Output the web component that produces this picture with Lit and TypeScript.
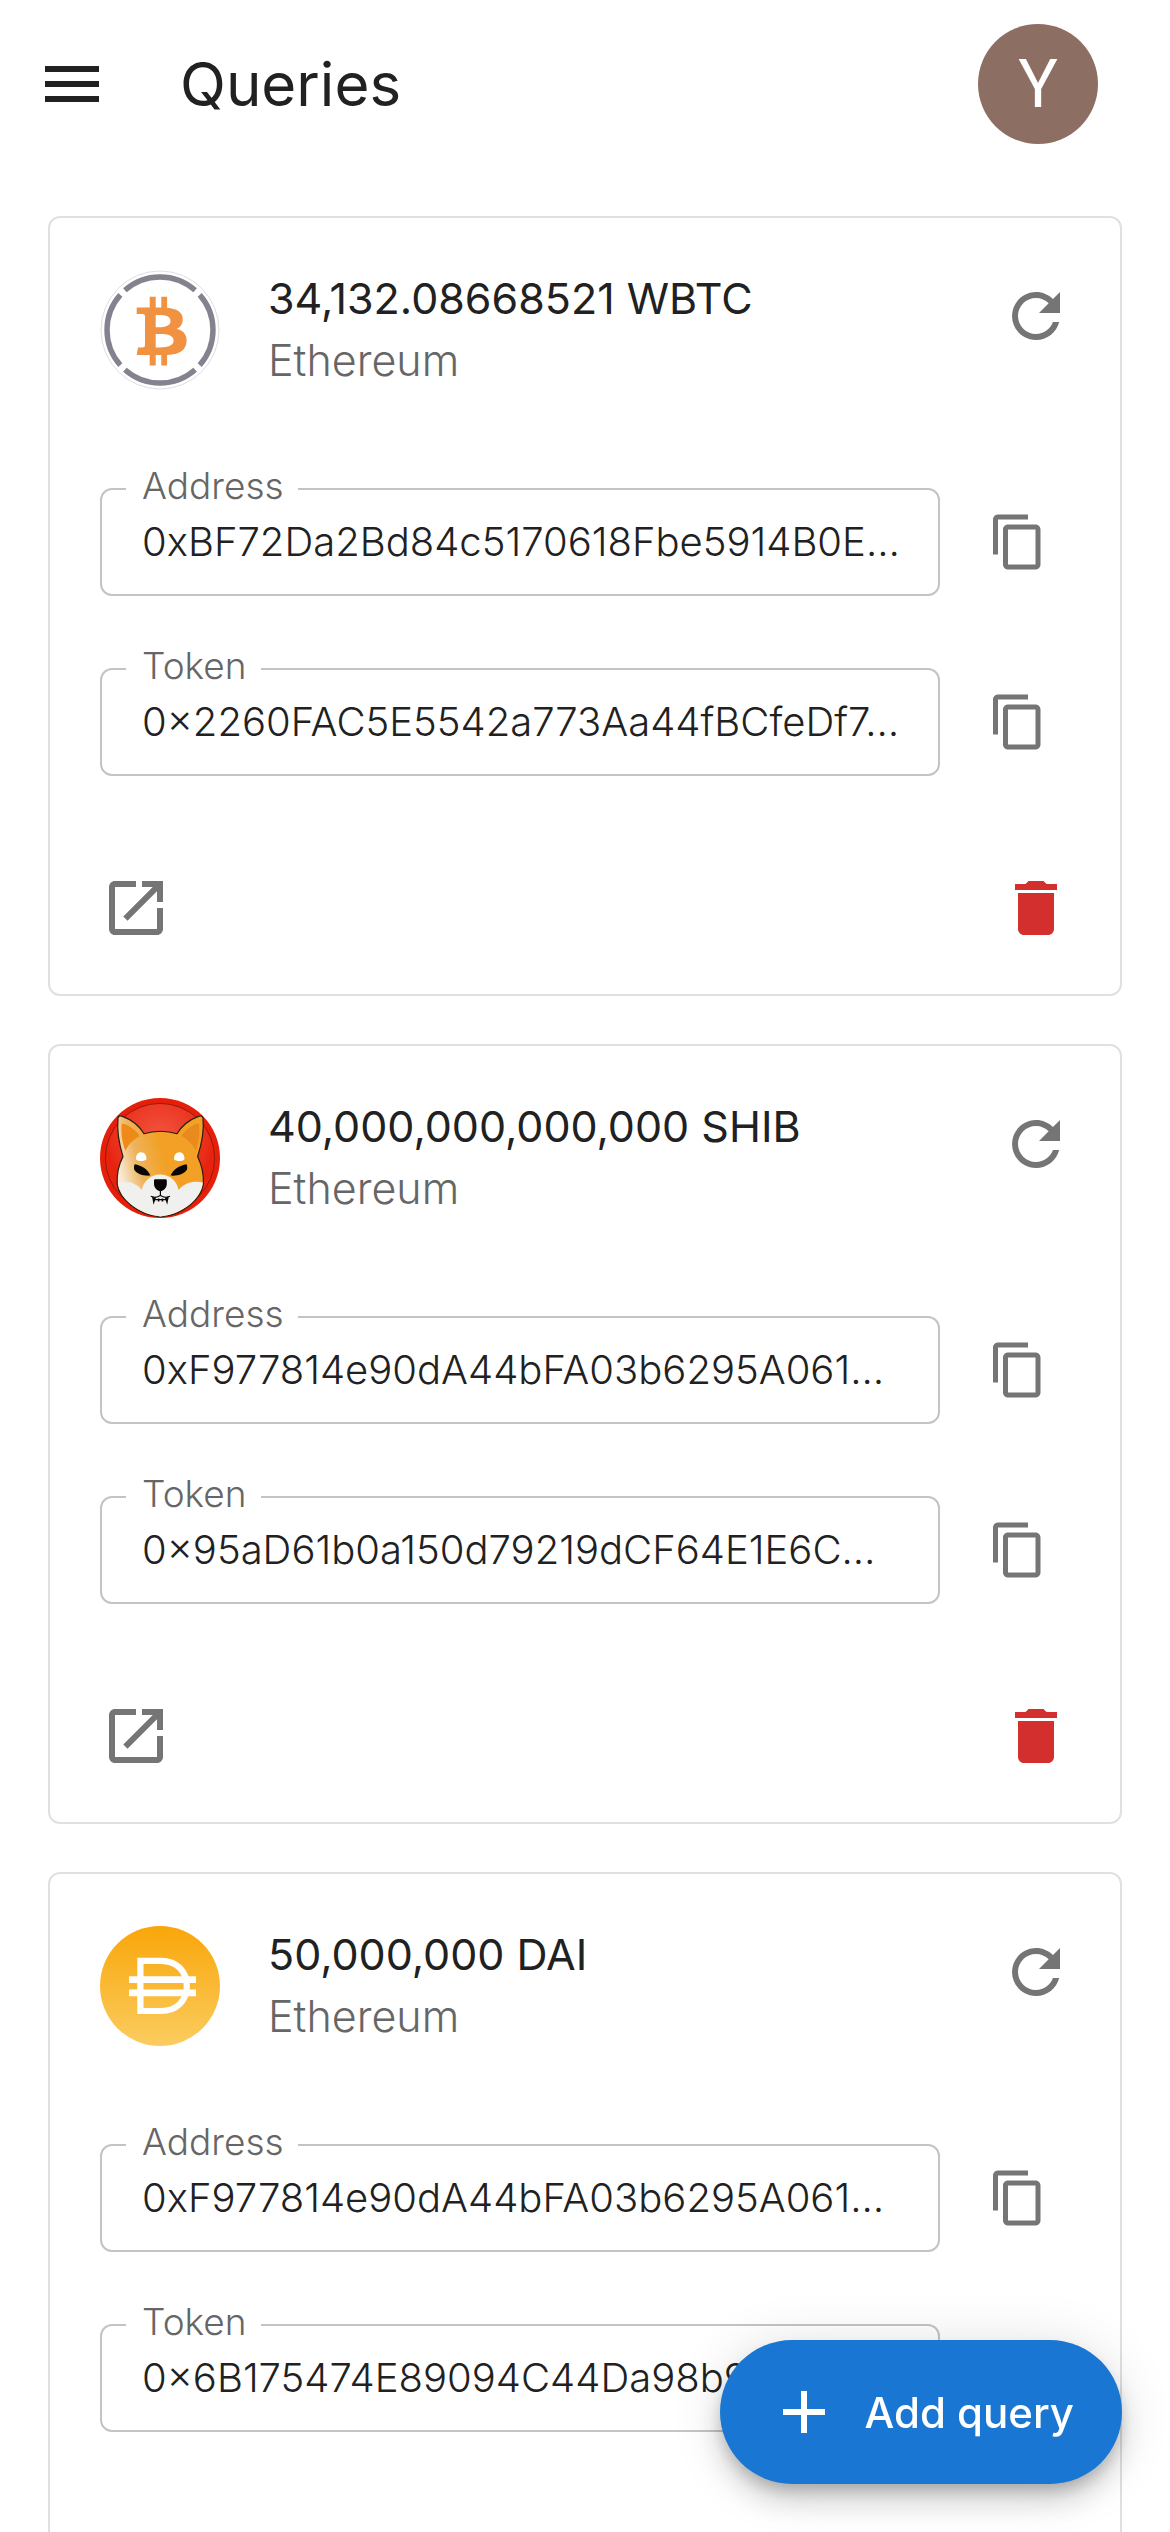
import { LitElement, html, svg, css } from "lit";
import { customElement, property } from "lit/decorators.js";

interface Query {
  id: string;
  amount: string;
  chain: string;
  logo: "wbtc" | "shib" | "dai";
  address: string;
  token: string;
}

const QUERIES: Query[] = [
  {
    id: "wbtc",
    amount: "34,132.08668521 WBTC",
    chain: "Ethereum",
    logo: "wbtc",
    address: "0xBF72Da2Bd84c5170618Fbe5914B0E…",
    token: "0×2260FAC5E5542a773Aa44fBCfeDf7…",
  },
  {
    id: "shib",
    amount: "40,000,000,000,000 SHIB",
    chain: "Ethereum",
    logo: "shib",
    address: "0xF977814e90dA44bFA03b6295A061…",
    token: "0×95aD61b0a150d79219dCF64E1E6C…",
  },
  {
    id: "dai",
    amount: "50,000,000 DAI",
    chain: "Ethereum",
    logo: "dai",
    address: "0xF977814e90dA44bFA03b6295A061…",
    token: "0×6B175474E89094C44Da98b954Ee…",
  },
];

const ICONS = {
  menu: "M3 18h18v-2H3v2zm0-5h18v-2H3v2zm0-7v2h18V6H3z",
  refresh:
    "M17.65 6.35C16.2 4.9 14.21 4 12 4c-4.42 0-7.99 3.58-7.99 8s3.57 8 7.99 8c3.73 0 6.84-2.55 7.73-6h-2.08c-.82 2.33-3.04 4-5.65 4-3.31 0-6-2.69-6-6s2.69-6 6-6c1.66 0 3.14.69 4.22 1.78L13 11h7V4l-2.35 2.35z",
  copy: "M16 1H4c-1.1 0-2 .9-2 2v14h2V3h12V1zm3 4H8c-1.1 0-2 .9-2 2v14c0 1.1.9 2 2 2h11c1.1 0 2-.9 2-2V7c0-1.1-.9-2-2-2zm0 16H8V7h11v14z",
  remove: "M6 19c0 1.1.9 2 2 2h8c1.1 0 2-.9 2-2V7H6v12zM19 4h-3.5l-1-1h-5l-1 1H5v2h14V4z",
  add: "M19 13h-6v6h-2v-6H5v-2h6V5h2v6h6v2z",
};

const icon = (path: string, small = false) => html`
  <svg class=${small ? "icon small" : "icon"} viewBox="0 0 24 24" aria-hidden="true">
    <path d=${path}></path>
  </svg>
`;

/* Square frame with two breaks and an arrow pointing out of its corner. */
const openIcon = html`
  <svg class="icon" viewBox="0 0 24 24" aria-hidden="true">
    <path d="M12 3H5c-1.1 0-2 .9-2 2v14c0 1.1.9 2 2 2h14c1.1 0 2-.9 2-2v-7h-2v7H5V5h7V3z"></path>
    <path d="M14 3h7v7h-2V6.41l-9.83 9.83-1.41-1.41L17.59 5H14V3z"></path>
  </svg>
`;

const wbtcLogo = svg`
  <circle cx="60" cy="60" r="59" fill="#fff" stroke="#dedee2" stroke-width="1"></circle>
  <g fill="none" stroke="#85818e" stroke-width="5.4">
    <path d="M24.9 20.3A53 53 0 0 1 95.1 20.3"></path>
    <path d="M99.7 24.9A53 53 0 0 1 99.7 95.1"></path>
    <path d="M95.1 99.7A53 53 0 0 1 24.9 99.7"></path>
    <path d="M20.3 95.1A53 53 0 0 1 20.3 24.9"></path>
  </g>
  <path
    fill="#f09242"
    fill-rule="evenodd"
    d="M36.7 37.4H49.7V26.8H55.7V37.4H61.3V26.8H67.1V37.7C76.5 38.6 82.8 42 82.8 49C82.8 53.8 80.8 57 76.8 58.7C83 60.5 86.6 64 86.6 70.3C86.6 80.2 79.5 84.6 67.1 85V95.6H61.3V85H55.7V95.6H49.7V85H36.7L38 77.4H42.4C44.3 77.4 45 76.7 45 74.8V46.8C45 44.6 44.2 43.9 42.2 43.9H36.7ZM55.7 45V57.3H58C65.8 57.3 70.5 55.6 70.5 51C70.5 46.6 66.4 45 59.2 45ZM55.7 64V77.4H59.6C68.6 77.4 73.6 75.6 73.6 70.6C73.6 65.8 68.6 64 59.6 64Z"
  ></path>
`;

const shibLogo = svg`
  <defs>
    <radialGradient id="coin" cx="0.5" cy="0.3" r="0.5">
      <stop offset="0" stop-color="#f25440"></stop>
      <stop offset="0.9" stop-color="#e92c17"></stop>
      <stop offset="1" stop-color="#e6230f"></stop>
    </radialGradient>
    <linearGradient id="fur" x1="18" y1="68" x2="62" y2="56" gradientUnits="userSpaceOnUse">
      <stop offset="0" stop-color="#f8ead6"></stop>
      <stop offset="0.45" stop-color="#eeb35c"></stop>
      <stop offset="1" stop-color="#f2a126"></stop>
    </linearGradient>
  </defs>
  <circle cx="60" cy="60" r="60" fill="#e51f09"></circle>
  <circle cx="60" cy="60" r="54.6" fill="url(#coin)" stroke="#96190b" stroke-width="1"></circle>
  <path
    fill="url(#fur)"
    stroke="#2b1c13"
    stroke-width="1.2"
    stroke-linejoin="round"
    d="M18 20C18.4 17.8 20.4 17.6 23 18.6C32 21.8 39 27.5 44 35.8C54 32.4 67 32.4 77 35.8C82 27.5 89 21.8 98 18.6C100.6 17.6 102.6 17.8 103 20C104.2 33 101.6 46.5 97.6 58.6C101.6 67 104 76.5 103.4 86C101.5 100 84 117 60.5 119C37 117 19 100 17.2 86C16.8 76.5 18.4 67 23 58.6C19.2 46.5 16.8 33 18 20Z"
  ></path>
  <path fill="#ee8b18" d="M21.8 25.6C29 26.8 35 31.4 39.6 38C33 41.6 28.4 46.5 25.4 52.4C22 44.5 20.8 34 21.8 25.6Z"></path>
  <path fill="#e98a1d" d="M99 25.6C92 26.8 86 31.4 81.4 38C88 41.6 92.6 46.5 95.6 52.4C99 44.5 100 34 99 25.6Z"></path>
  <path
    fill="#f0f1ee"
    d="M18 84.6C26 82.4 36 84.6 41.8 92C43.6 83 50.6 76.4 60.2 76.4C70 76.4 77 83 78.6 92C84.4 84.6 94.4 82.4 102.8 84.6C102 99 84 116.6 60.5 118.4C37 116.6 19.4 99 18 84.6Z"
  ></path>
  <g fill="#fff">
    <path d="M36 61.4C35.6 56.8 38 54.2 41.2 54.2C44.6 54.2 46.8 57.6 46.4 61.6C43.4 63.6 38.6 63.6 36 61.4Z"></path>
    <path d="M74 61.6C73.6 57.6 76 54.2 79.2 54.2C82.4 54.2 84.8 56.8 84.4 61.4C81.8 63.6 77 63.6 74 61.6Z"></path>
  </g>
  <g fill="#080604">
    <path d="M34.6 66.2C42 67.6 47.6 70.8 50.4 77.6C43.6 78.4 36 75.6 34.2 71.6C33.8 69.6 34 67.6 34.6 66.2Z"></path>
    <path d="M86.6 66.2C79.2 67.6 73.4 70.8 70.6 77.6C77.4 78.4 85 75.6 87 71.6C87.4 69.6 87.2 67.6 86.6 66.2Z"></path>
    <path d="M54 82.4C54 81.4 54.6 81.2 56 81.2H64.8C66.2 81.2 66.8 81.6 66.8 82.8V86C66.8 89.6 63.6 93.2 60.4 93.2C57.2 93.2 54 89.6 54 86Z"></path>
  </g>
  <g fill="none" stroke="#080604">
    <path stroke-width="1.2" d="M60.4 92V97.8M50.8 98.2C54 99.8 57.6 99.4 60.4 97.6C63.2 99.4 66.8 99.8 70 98.2M55 101.6H66"></path>
    <path stroke-width="1.6" d="M52.8 98.6L53.8 103.6L55.2 99.4M68 98.6L67 103.6L65.6 99.4M58.6 100.6V103.4M62.4 100.6V103.4"></path>
  </g>
`;

const daiLogo = svg`
  <defs>
    <linearGradient id="gold" x1="0" y1="0" x2="0" y2="1">
      <stop offset="0" stop-color="#f9a60a"></stop>
      <stop offset="1" stop-color="#fbcc5f"></stop>
    </linearGradient>
  </defs>
  <circle cx="60" cy="60" r="60" fill="url(#gold)"></circle>
  <path
    fill="none"
    stroke="#fff"
    stroke-width="6.2"
    d="M40.4 34.9H61C77 34.9 86.8 45.6 86.8 60C86.8 74.4 77 85 61 85H40.4Z"
  ></path>
  <path fill="#fff" d="M29 50.2H96V57H29ZM29 63.5H96V70.3H29Z"></path>
`;

const LOGOS = { wbtc: wbtcLogo, shib: shibLogo, dai: daiLogo };

const shared = css`
  * {
    box-sizing: border-box;
  }
  button,
  input {
    margin: 0;
    padding: 0;
    border: 0;
    background: none;
    color: inherit;
    font: inherit;
  }
  button,
  a {
    cursor: pointer;
  }
  .icon {
    display: block;
    width: 72px;
    height: 72px;
    fill: currentColor;
  }
  .icon.small {
    width: 60px;
    height: 60px;
  }
  .icon-button {
    display: flex;
    flex: none;
    align-items: center;
    justify-content: center;
    width: 120px;
    height: 120px;
    border-radius: 50%;
    color: #757575;
  }
`;

@customElement("query-card")
export class QueryCard extends LitElement {
  @property({ attribute: false }) query!: Query;

  static styles = [
    shared,
    css`
      :host {
        display: block;
      }
      .card {
        border: 2px solid #e0e0e0;
        border-radius: 12px;
        background: #fff;
      }
      .head {
        display: flex;
        align-items: flex-start;
        padding: 50px 24px 0 50px;
      }
      .logo {
        flex: none;
        width: 120px;
        height: 120px;
        margin: 2px 48px 2px 0;
      }
      .heading {
        flex: 1;
        min-width: 0;
      }
      .amount,
      .chain {
        margin: 0;
        font-size: 43px;
      }
      .amount {
        font-weight: 400;
        line-height: 60px;
      }
      .chain {
        font-weight: 300;
        line-height: 64px;
        color: #666;
      }
      .refresh {
        margin-top: -12px;
      }
      .fields {
        display: flex;
        flex-direction: column;
        gap: 48px;
        padding: 72px 50px;
      }
      .row {
        display: flex;
        align-items: flex-end;
        gap: 26px;
      }
      .field {
        flex: 1;
        min-width: 0;
        margin: 0;
        padding: 0 24px 24px 40px;
        border: 2px solid #c4c4c4;
        border-radius: 12px;
      }
      .legend {
        margin-left: -16px;
        padding: 0 14px 6px 16px;
        font-size: 37px;
        line-height: 44px;
        color: #666;
      }
      .value {
        display: block;
        width: 100%;
        height: 56px;
        padding-bottom: 2px;
        font-size: 40px;
        text-overflow: ellipsis;
        outline: none;
      }
      .copy {
        width: 104px;
        height: 108px;
      }
      .actions {
        display: flex;
        justify-content: space-between;
        padding: 0 24px 26px 26px;
      }
      .remove {
        color: #d32f2f;
      }
    `,
  ];

  private field(name: string, label: string, value: string) {
    return html`
      <div class="row">
        <fieldset class="field">
          <legend class="legend"><label for=${name}>${label}</label></legend>
          <input class="value" id=${name} type="text" readonly .value=${value} />
        </fieldset>
        <button class="icon-button copy" type="button" aria-label="Copy ${label}">
          ${icon(ICONS.copy, true)}
        </button>
      </div>
    `;
  }

  render() {
    const q = this.query;
    return html`
      <article class="card">
        <header class="head">
          <svg class="logo" viewBox="0 0 120 120" aria-hidden="true">${LOGOS[q.logo]}</svg>
          <div class="heading">
            <h2 class="amount">${q.amount}</h2>
            <p class="chain">${q.chain}</p>
          </div>
          <button class="icon-button refresh" type="button" aria-label="Refresh">
            ${icon(ICONS.refresh)}
          </button>
        </header>
        <div class="fields">
          ${this.field("address", "Address", q.address)} ${this.field("token", "Token", q.token)}
        </div>
        <footer class="actions">
          <a class="icon-button" href="#${q.id}" aria-label="Open in explorer">${openIcon}</a>
          <button class="icon-button remove" type="button" aria-label="Delete">
            ${icon(ICONS.remove)}
          </button>
        </footer>
      </article>
    `;
  }
}

@customElement("app-root")
export class AppRoot extends LitElement {
  static styles = [
    shared,
    css`
      :host {
        display: flex;
        flex-direction: column;
        height: 100vh;
        background: #fff;
        color: #212121;
        font-family: Inter, "Liberation Sans", sans-serif;
        font-weight: 300;
      }
      .bar {
        display: flex;
        flex: none;
        align-items: center;
        gap: 48px;
        padding: 24px 72px 24px 12px;
      }
      .menu {
        color: inherit;
      }
      .title {
        flex: 1;
        margin: 0;
        font-size: 60px;
        font-weight: 400;
        line-height: 96px;
      }
      .account {
        width: 120px;
        height: 120px;
        border-radius: 50%;
        background: #8d6e63;
        color: #fff;
        font-family: Roboto, sans-serif;
        font-size: 66px;
        font-weight: 400;
      }
      .list {
        display: flex;
        flex: 1;
        flex-direction: column;
        gap: 48px;
        min-height: 0;
        padding: 48px;
        overflow-y: auto;
        scrollbar-width: none;
      }
      .add {
        position: fixed;
        right: 48px;
        bottom: 48px;
        display: flex;
        align-items: center;
        gap: 24px;
        height: 144px;
        padding: 0 48px;
        border-radius: 72px;
        background: #1976d2;
        color: #fff;
        font-size: 42px;
        font-weight: 500;
        box-shadow:
          0 9px 15px -3px rgba(0, 0, 0, 0.2),
          0 18px 30px 0 rgba(0, 0, 0, 0.14),
          0 3px 54px 0 rgba(0, 0, 0, 0.12);
      }
    `,
  ];

  render() {
    return html`
      <header class="bar">
        <button class="icon-button menu" type="button" aria-label="Menu">${icon(ICONS.menu)}</button>
        <h1 class="title">Queries</h1>
        <button class="account" type="button" aria-label="Account Y">Y</button>
      </header>
      <main class="list">${QUERIES.map((q) => html`<query-card .query=${q}></query-card>`)}</main>
      <button class="add" type="button">${icon(ICONS.add)}<span>Add query</span></button>
    `;
  }
}
